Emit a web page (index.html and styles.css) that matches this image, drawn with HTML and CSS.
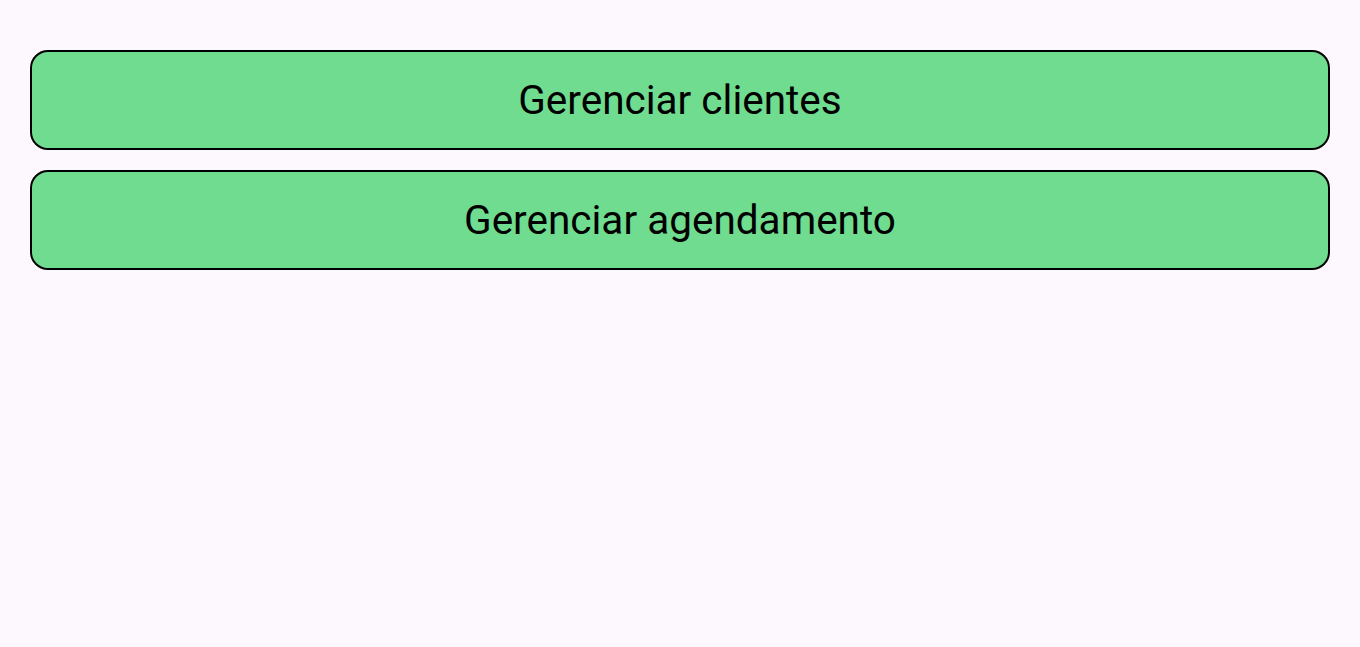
FILE: index.html
```html
<!DOCTYPE html>
<html lang="pt">
<head>
    <meta charset="UTF-8">
    <meta name="viewport" content="width=device-width, initial-scale=1.0">
    <title>Menu</title>
    <link rel="stylesheet" href="styles.css">
</head>
<body>
    <div class="container">
        <button class="btn">Gerenciar clientes</button>
        <button class="btn">Gerenciar agendamento</button>
    </div>
</body>
</html>
```

FILE: styles.css
```css
* {
    margin: 0;
    padding: 0;
    box-sizing: border-box;
}

body {
    background: #fdf7fe;
    font-family: Roboto, sans-serif;
    min-height: 100vh;
}

.container {
    display: flex;
    flex-direction: column;
    gap: 20px;
    padding: 50px 30px;
}

.btn {
    height: 100px;
    background: #6fdc8f;
    border: 2px solid #000;
    border-radius: 18px;
    color: #000;
    font-family: Roboto, sans-serif;
    font-size: 40.5px;
    text-align: center;
}
```
